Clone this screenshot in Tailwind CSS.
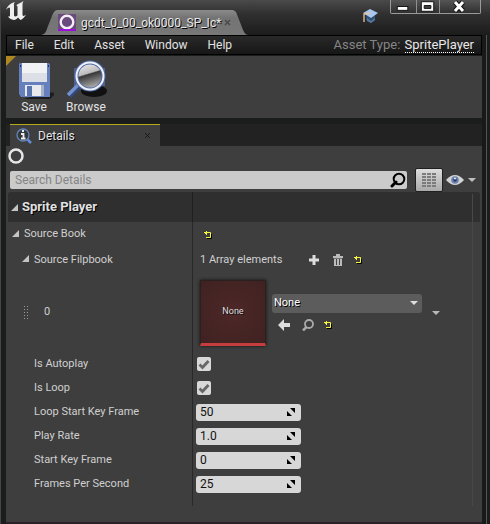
<!DOCTYPE html>
<html lang="en">
<head>
<meta charset="utf-8">
<title>SpritePlayer</title>
<script src="https://cdn.jsdelivr.net/npm/@tailwindcss/browser@4"></script>
</head>
<body class="bg-[#3e3e3e] font-['Roboto',sans-serif] text-[#d0d0d0]">
<svg class="hidden" aria-hidden="true">
  <symbol id="reset" viewBox="0 0 8 8"><path d="M3 7.500H7.500V3" fill="none" stroke="#000"/><path d="M0 1.500H6.500V6.500H2M2.500 0V4M1.500 1V3" fill="none" stroke="#f5f540"/></symbol>
  <symbol id="expand" viewBox="0 0 8 8"><path d="M3 0H8V5ZM0 3V8H5Z" fill="#000"/></symbol>
  <symbol id="check" viewBox="0 0 14 14"><path d="M2.500 7.500L5.500 10.500L11.500 4" fill="none" stroke="#666" stroke-width="2.800"/></symbol>
  <symbol id="fold" viewBox="0 0 7 7"><path d="M7 0V7H0Z" fill="#c4c4c4"/></symbol>
  <symbol id="down" viewBox="0 0 8 4"><path d="M0 0H8L4 4Z" fill="currentColor"/></symbol>
</svg>
<div class="flex min-h-screen flex-col border-l border-[#454545] bg-[#1b1c1c]">
  <header class="flex h-[35px] items-end bg-linear-to-b from-[#4a4a4a] via-[#303030] via-40% to-[#1c1c1c] pl-[5px]">
    <svg class="mb-[14px] h-[20px] w-[24px] shrink-0" viewBox="0 0 24 20" role="img" aria-label="Unreal Engine"><path d="M0 9C1.500 4.500 5 2 9 1C7.500 2.300 8 3.500 8 5V14C8 15.600 9.500 16 11.500 14.500V6C11.500 4.800 11 4.300 10 4.500C12 2.500 15 2 17.500 0C16.500 2 16.500 3 16.500 4.500V14C17 15.500 18.500 15 20 13.500C18.500 16.500 16.500 18 14.500 19L12 16.500C10.500 18.500 8.500 19.500 6 18.500C4 17.800 3 17 2 15.500C3.500 15.800 4 15.500 4 14V7.500C4 5.500 1.500 6.500 0 9Z" fill="#eee"/></svg>
    <div class="relative ml-[11px] flex h-[25px] w-[208px] shrink-0 items-center pl-[17px] pr-[18px]">
      <svg class="absolute inset-0 h-full w-full" viewBox="0 0 208 25" preserveAspectRatio="none" aria-hidden="true"><defs><linearGradient id="tg" x2="0" y2="1"><stop stop-color="#8b8b8b"/><stop offset=".3" stop-color="#747474"/><stop offset="1" stop-color="#777"/></linearGradient></defs><path d="M0 25C5 24 5 21 7 16L11 6C13 1 14 0 18 0H190C195 0 195 2 197 7L202 20C204 24 205 25 208 25Z" fill="url(#tg)"/></svg>
      <svg class="relative h-[17px] w-[18px] shrink-0" viewBox="0 0 18 17" aria-hidden="true"><path d="M0 0H18V17H0Z" fill="#6a4a7c"/><circle cx="9" cy="8" r="6.300" fill="none" stroke="#f4eef7" stroke-width="2.400"/><path d="M0 16H18" stroke="#a800f0" stroke-width="1.600"/></svg>
      <span class="relative ml-[5px] whitespace-nowrap text-[12px] text-[#e8e8e8] [text-shadow:1px_1px_0_#000]">gcdt_0_00_ok0000_SP_Ic*</span>
      <button class="relative ml-auto h-[7px] w-[7px] shrink-0" aria-label="Close tab"><svg class="block" viewBox="0 0 7 7"><path d="M1 1L6 6M6 1L1 6" stroke="#484848" stroke-width="1.400"/></svg></button>
    </div>
    <svg class="mb-[11px] ml-auto h-[15px] w-[16px] shrink-0" viewBox="0 0 16 15" role="img" aria-label="Tutorials"><path d="M4 6V11L9 14L13 11V6Z" fill="#304d72"/><path d="M5 9L9 12L13 9V11L9 14L5 12Z" fill="#58799f"/><path d="M1 4L8 0L16 4L9 9Z" fill="#a9c6ef"/><path d="M8 4L2 5V13" fill="none" stroke="#e5c69b" stroke-width="1.300"/></svg>
    <div class="ml-[12px] mr-[9px] flex h-[14px] shrink-0 self-start divide-x divide-[#909090] rounded-b-[2px] border-x border-b border-[#9a9a9a] bg-linear-to-b from-[#555] to-[#303030]">
      <button class="w-[26px]" aria-label="Minimize"><svg class="h-[13px] w-full" viewBox="0 0 26 13"><rect x="6.500" y="6.500" width="11" height="4" fill="#fff" stroke="#111"/></svg></button>
      <button class="w-[23px]" aria-label="Maximize"><svg class="h-[13px] w-full" viewBox="0 0 23 13"><path d="M4.500 1.500H17.500V11.500H4.500Z" fill="#fff" stroke="#111"/><path d="M7.500 5.500H14.500V8.500H7.500Z" fill="#444" stroke="#111"/></svg></button>
      <button class="w-[40px]" aria-label="Close"><svg class="h-[13px] w-full" viewBox="0 0 40 13"><path d="M15 2L23 11M23 2L15 11" stroke="#111" stroke-width="5"/><path d="M15 2L23 11M23 2L15 11" stroke="#fff" stroke-width="3"/></svg></button>
    </div>
  </header>

  <div class="flex grow pl-[5px] pr-[3px]">
    <div class="flex min-w-0 grow flex-col">
      <nav class="flex h-5 items-center border border-black bg-linear-to-b from-[#292929] to-[#171717] pl-2 pr-[7px] text-[12px] text-[#e2e2e2]">
        <button class="mr-5">File</button><button class="mr-5">Edit</button><button class="mr-5">Asset</button><button class="mr-5">Window</button><button>Help</button>
        <span class="ml-auto whitespace-nowrap text-[13px] text-[#858585]">Asset Type: <a href="#" class="ml-px inline-block h-[15px] border-b border-dotted border-white leading-[14px] text-[#e8e8e8]">SpritePlayer</a></span>
      </nav>
      <div class="relative mt-px flex h-[62px] bg-[#3e3e3e] pl-1 pt-[4px] text-[12px] text-[#e4e4e4] [text-shadow:1px_1px_0_#000]">
        <svg class="absolute left-0 top-0 h-[10px] w-[10px]" viewBox="0 0 10 10" aria-hidden="true"><path d="M0 0H10L0 10Z" fill="#ae8821"/></svg>
        <button class="flex w-[48px] flex-col items-center">
          <svg class="h-10 w-10" viewBox="0 0 40 40" aria-hidden="true"><path d="M31 32L42 33L36 39H10Z" fill="#1c1c1c"/><path d="M5 4Q5 3 7 3H34Q36 3 36 5V37H7L5 34Z" fill="#6580bd"/><path d="M8 3H33V22H8Z" fill="#f1f2f4"/><path d="M8 13H33V22H8Z" fill="#dcdfe5"/><path d="M11 25H27V36H11Z" fill="#e8eaed"/><path d="M13 26H18V36H13Z" fill="#5874b1"/><path d="M27 25H30V36H27Z" fill="#a7b1cc"/><path d="M6 6H7M34 6H35" stroke="#24335d" stroke-width="2"/></svg>
          <span class="leading-[14px]">Save</span>
        </button>
        <button class="ml-1 flex w-[48px] flex-col items-center">
          <svg class="h-10 w-[44px]" viewBox="0 0 44 40" aria-hidden="true"><defs><linearGradient id="lens" x2=".3" y2="1"><stop stop-color="#f8f8f8"/><stop offset=".48" stop-color="#bbb"/><stop offset=".53" stop-color="#383838"/><stop offset="1" stop-color="#aaa"/></linearGradient></defs><ellipse cx="30" cy="31" rx="13" ry="6" fill="#111"/><path d="M10 8H41V26H10Z" fill="#4f6190"/><path d="M5 36L15 26" stroke="#34477b" stroke-width="6"/><path d="M4 35L15 24" stroke="#7590ce" stroke-width="3.500"/><circle cx="26" cy="16" r="13.500" fill="url(#lens)" stroke="#5069a5" stroke-width="4"/><circle cx="26" cy="16" r="13.500" fill="none" stroke="#eef2fa" stroke-width="2"/></svg>
          <span class="leading-[14px]">Browse</span>
        </button>
      </div>

      <div class="mt-[6px] flex h-[22px] bg-[#222] pl-1">
        <div class="flex w-[150px] items-center border-t border-[#b6aa18] bg-[#3e3e3e] pl-[6px] pr-[9px] text-[12px] text-[#e4e4e4]">
          <svg class="h-4 w-4" viewBox="0 0 16 16" aria-hidden="true"><path d="M10 10L15 15" stroke="#658bda" stroke-width="2.500"/><circle cx="7" cy="7" r="6" fill="#33383f" stroke="#6685b9" stroke-width="1.300"/><path d="M6 3H8M5 6H7.500V10M5 10.500H9.500" fill="none" stroke="#eee" stroke-width="1.800"/></svg>
          <span class="ml-[6px] [text-shadow:1px_1px_0_#000]">Details</span>
          <button class="ml-auto h-[7px] w-[7px]" aria-label="Close Details"><svg class="block" viewBox="0 0 7 7"><path d="M1 1L6 6M6 1L1 6" stroke="#181818"/></svg></button>
        </div>
      </div>

      <main class="flex grow flex-col bg-[#3e3e3e] px-[2px]">
        <svg class="mt-[2px] h-4 w-4" viewBox="0 0 16 16" aria-hidden="true"><circle cx="8" cy="8" r="6.500" fill="none" stroke="#e6e6ea" stroke-width="2.500"/></svg>
        <div class="mt-1 flex h-6 items-center pl-[2px]">
          <div class="relative flex min-w-0 grow">
            <input type="search" aria-label="Search Details" placeholder="Search Details" class="h-[18px] w-full rounded-[2px] bg-[#cbcbcb] px-[5px] text-[12px] text-black placeholder:text-[#858585]">
            <svg class="absolute right-[1px] top-[1px] h-4 w-4" viewBox="0 0 16 16" aria-hidden="true"><path d="M6 10L2 14" stroke="#000" stroke-width="3" stroke-linecap="round"/><circle cx="9" cy="7" r="5.300" fill="none" stroke="#000" stroke-width="2"/></svg>
          </div>
          <button class="ml-2 flex h-6 w-7 items-center justify-center rounded-[2px] border border-[#202020] bg-linear-to-b from-[#ddd] to-[#aaa]" aria-label="Property matrix"><svg class="h-[14px] w-[14px]" viewBox="0 0 14 14"><path d="M0 1H14M0 4H14M0 7H14M0 10H14M0 13H14" stroke="#7c7c7c" stroke-width="2" stroke-dasharray="4 1"/></svg></button>
          <button class="ml-[3px] mr-1 flex items-center gap-1 text-[#c0c0c0]" aria-label="View options">
            <svg class="h-[10px] w-[18px]" viewBox="0 0 18 10"><path d="M0 5Q9-5 18 5Q9 15 0 5Z" fill="#d3d3d3"/><circle cx="9" cy="5" r="3.800" fill="#6d82ae"/><circle cx="9" cy="5" r="1.800" fill="#263c6c"/><circle cx="9" cy="3.500" r="1" fill="#eee"/></svg>
            <svg class="h-1 w-2"><use href="#down"/></svg>
          </button>
        </div>

        <section class="relative text-[11px]">
          <div class="absolute bottom-0 right-[7px] top-[2px] w-px bg-[#484848]"></div>
          <div class="flex h-[30px] rounded-t-[3px] bg-[#2f2f2f]">
            <h2 class="flex w-[185px] items-center gap-1 border-r border-[#202020] pl-[3px] text-[13px] font-bold text-[#e0e0e0] [text-shadow:1px_1px_0_#000]"><svg class="h-[7px] w-[7px]"><use href="#fold"/></svg>Sprite Player</h2>
          </div>
          <div class="flex h-[25px]">
            <div class="flex w-[185px] items-center gap-[5px] border-r border-[#282828] pl-1"><svg class="mb-[3px] h-[7px] w-[7px]"><use href="#fold"/></svg>Source Book</div>
            <button class="ml-[11px]" aria-label="Reset Source Book"><svg class="h-2 w-2"><use href="#reset"/></svg></button>
          </div>
          <div class="flex h-[26px]">
            <div class="flex w-[185px] items-center gap-[5px] border-r border-[#282828] pl-[14px]"><svg class="mb-[3px] h-[7px] w-[7px]"><use href="#fold"/></svg>Source Filpbook</div>
            <div class="flex items-center pl-[7px]">
              <span class="w-[108px]">1 Array elements</span>
              <button aria-label="Add element"><svg class="h-3 w-3" viewBox="0 0 12 12"><path d="M6 1V11M1 6H11" stroke="#ddd" stroke-width="3"/></svg></button>
              <button class="ml-[13px]" aria-label="Remove all"><svg class="h-[13px] w-[10px]" viewBox="0 0 10 13"><path d="M0 2H10V4H0ZM3 0H7V2H3ZM1 4H9V12H1Z" fill="#bbb"/><path d="M3.500 5V11M6.500 5V11" stroke="#444"/><path d="M0 4.500H10" stroke="#444" stroke-width=".6"/></svg></button>
              <button class="ml-[11px]" aria-label="Reset Source Filpbook"><svg class="h-2 w-2"><use href="#reset"/></svg></button>
            </div>
          </div>
          <div class="flex h-[79px]">
            <div class="flex w-[185px] items-center border-r border-[#282828] pl-4">
              <svg class="h-[13px] w-[4px]" viewBox="0 0 4 13" aria-hidden="true"><path d="M.5 0V13M3.500 0V13" stroke="#999" stroke-dasharray="1 2"/></svg><span class="ml-4">0</span>
            </div>
            <div class="flex items-center pl-[7px]">
              <button class="flex h-[66px] w-[66px] items-center justify-center border border-b-[3px] border-[#2b2020] border-b-[#c63d3d] bg-radial from-[#4d2828] to-[#402121] text-[9px] text-[#ddd] shadow-[0_0_3px_#111] [text-shadow:1px_1px_0_#111]">None</button>
              <div class="ml-[6px] flex flex-col">
                <div class="relative flex h-[19px] w-[150px] text-[#ddd]">
                  <select aria-label="Source Filpbook 0" class="w-full appearance-none rounded-[3px] bg-[#5c5c5c] px-[2px] text-[11px] text-white [text-shadow:1px_1px_0_#000]"><option>None</option></select>
                  <svg class="pointer-events-none absolute right-1 top-[7px] h-1 w-2"><use href="#down"/></svg>
                </div>
                <div class="mt-[6px] flex h-3 items-center pl-[6px]">
                  <button aria-label="Use selected asset"><svg class="h-3 w-3" viewBox="0 0 12 12"><path d="M0 6L6 0V4H12V8H6V12Z" fill="#ddd"/></svg></button>
                  <button class="ml-3" aria-label="Browse to asset"><svg class="h-3 w-3" viewBox="0 0 12 12"><path d="M4.500 8L1 11.500" stroke="#aaa" stroke-width="2.500"/><circle cx="7" cy="5" r="4" fill="none" stroke="#aaa" stroke-width="1.800"/></svg></button>
                  <button class="ml-[10px]" aria-label="Reset asset"><svg class="h-2 w-2"><use href="#reset"/></svg></button>
                </div>
              </div>
              <button class="ml-[10px] text-[#b8b8b8]" aria-label="Element options"><svg class="h-1 w-2"><use href="#down"/></svg></button>
            </div>
          </div>
          <div class="flex h-6">
            <label for="autoplay" class="flex w-[185px] items-center border-r border-[#282828] pl-[26px] pt-px">Is Autoplay</label>
            <div class="relative flex items-center pl-1"><input id="autoplay" type="checkbox" checked class="h-[14px] w-[14px] appearance-none rounded-[2px] bg-[#d8d8d8]"><svg class="pointer-events-none absolute h-[14px] w-[14px]"><use href="#check"/></svg></div>
          </div>
          <div class="flex h-6">
            <label for="loop" class="flex w-[185px] items-center border-r border-[#282828] pl-[26px] pt-px">Is Loop</label>
            <div class="relative flex items-center pl-1"><input id="loop" type="checkbox" checked class="h-[14px] w-[14px] appearance-none rounded-[2px] bg-[#d8d8d8]"><svg class="pointer-events-none absolute h-[14px] w-[14px]"><use href="#check"/></svg></div>
          </div>
          <div class="flex h-6">
            <label for="loopstart" class="flex w-[185px] items-center border-r border-[#282828] pl-[26px] pt-px">Loop Start Key Frame</label>
            <div class="relative flex items-center pl-[3px]"><input id="loopstart" value="50" class="h-[17px] w-[105px] rounded-[3px] bg-[#d7d7d7] px-1 text-[12px] text-[#111]"><svg class="pointer-events-none absolute right-[6px] h-2 w-2"><use href="#expand"/></svg></div>
          </div>
          <div class="flex h-6">
            <label for="rate" class="flex w-[185px] items-center border-r border-[#282828] pl-[26px] pt-px">Play Rate</label>
            <div class="relative flex items-center pl-[3px]"><input id="rate" value="1.0" class="h-[17px] w-[105px] rounded-[3px] bg-[#d7d7d7] px-1 text-[12px] text-[#111]"><svg class="pointer-events-none absolute right-[6px] h-2 w-2"><use href="#expand"/></svg></div>
          </div>
          <div class="flex h-6">
            <label for="start" class="flex w-[185px] items-center border-r border-[#282828] pl-[26px] pt-px">Start Key Frame</label>
            <div class="relative flex items-center pl-[3px]"><input id="start" value="0" class="h-[17px] w-[105px] rounded-[3px] bg-[#d7d7d7] px-1 text-[12px] text-[#111]"><svg class="pointer-events-none absolute right-[6px] h-2 w-2"><use href="#expand"/></svg></div>
          </div>
          <div class="flex h-6">
            <label for="fps" class="flex w-[185px] items-center border-r border-[#282828] pl-[26px] pt-px">Frames Per Second</label>
            <div class="relative flex items-center pl-[3px]"><input id="fps" value="25" class="h-[17px] w-[105px] rounded-[3px] bg-[#d7d7d7] px-1 text-[12px] text-[#111]"><svg class="pointer-events-none absolute right-[6px] h-2 w-2"><use href="#expand"/></svg></div>
          </div>
          <div class="h-[10px] w-[185px] border-r border-[#282828]"></div>
        </section>
      </main>
      <div class="h-[2px] bg-[#2a2026]"></div>
    </div>
    <div class="w-[5px] shrink-0 border-r border-[#555] bg-[#191919]"></div>
  </div>
</div>
</body>
</html>
